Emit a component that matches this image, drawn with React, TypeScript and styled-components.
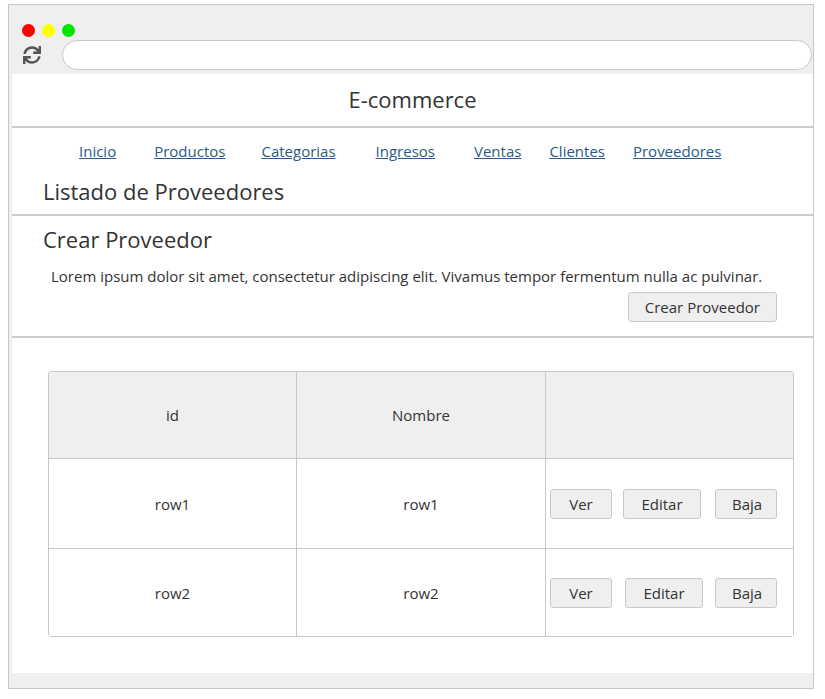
import styled, { createGlobalStyle } from 'styled-components'
import { FaSync } from 'react-icons/fa'

const GlobalStyle = createGlobalStyle`
  body {
    margin: 0;
    background: #ffffff;
    font-family: "Open Sans", "Noto Sans", sans-serif;
    color: #333333;
  }
`

const Frame = styled.div`
  box-sizing: border-box;
  width: 806px;
  margin: 4px 0 0 8px;
  border: 1px solid #c8c8c8;
  background: #efefef;
  padding: 0 0 15px 3px;
`

const Chrome = styled.div`
  display: flex;
  flex-direction: column;
  padding: 19px 1px 4px 10px;
`

const Lights = styled.div`
  display: flex;
  gap: 7px;
  height: 13px;
`

const Light = styled.span<{ $color: string }>`
  width: 13px;
  height: 13px;
  border-radius: 50%;
  background: ${p => p.$color};
`

const AddressRow = styled.div`
  display: flex;
  align-items: center;
  margin-top: 3px;
  padding-left: 1px;
  gap: 21px;
  color: #555555;
`

const UrlBar = styled.div`
  flex: 1;
  box-sizing: border-box;
  height: 30px;
  border: 1px solid #c8c8c8;
  border-radius: 15px;
  background: #ffffff;
`

const Page = styled.div`
  background: #ffffff;
  height: 599px;
  display: flex;
  flex-direction: column;
`

const Brand = styled.div`
  box-sizing: border-box;
  height: 54px;
  padding-bottom: 2px;
  display: flex;
  align-items: center;
  justify-content: center;
  font-size: 22px;
  border-bottom: 2px solid #cccccc;
`

const TopSection = styled.div`
  padding: 13px 0 8px 31px;
  border-bottom: 2px solid #cccccc;
`

const Nav = styled.nav`
  display: flex;
  height: 20px;
  align-items: center;
  padding-left: 36px;
`

const NavLink = styled.a<{ $ml: number }>`
  margin-left: ${p => p.$ml}px;
  font-size: 15px;
  color: #2b5a8a;
  text-decoration: underline;
  line-height: 20px;
`

const Title = styled.h1`
  margin: 15px 0 0;
  font-size: 22px;
  font-weight: 400;
  line-height: 30px;
`

const CreateSection = styled.section`
  display: flex;
  flex-direction: column;
  padding: 8px 36px 14px 31px;
  border-bottom: 2px solid #cccccc;
`

const Subtitle = styled.h2`
  margin: 0;
  font-size: 22px;
  font-weight: 400;
  line-height: 30px;
`

const Lead = styled.p`
  margin: 12px 0 0 8px;
  font-size: 15px;
  line-height: 20px;
`

const Button = styled.button<{ $w?: number; $ml?: number }>`
  box-sizing: border-box;
  height: 30px;
  width: ${p => (p.$w ? `${p.$w}px` : 'auto')};
  margin-left: ${p => p.$ml ?? 0}px;
  padding: 0 16px;
  border: 1px solid #c8c8c8;
  border-radius: 3px;
  background: #efefef;
  font-family: inherit;
  font-size: 15px;
  color: #333333;
`

const CreateButton = styled(Button)`
  align-self: flex-end;
  margin-top: 6px;
`

const TableArea = styled.div`
  padding: 33px 19px 0 36px;
`

const Grid = styled.div`
  display: grid;
  grid-template-columns: 248px 249px 1fr;
  grid-template-rows: 87px 90px 87px;
  border: 1px solid #c8c8c8;
  border-radius: 3px;
  overflow: hidden;
`

const Cell = styled.div<{ $head?: boolean; $last?: boolean; $bottom?: boolean }>`
  display: flex;
  align-items: center;
  justify-content: center;
  font-size: 15px;
  background: ${p => (p.$head ? '#efefef' : '#ffffff')};
  border-right: ${p => (p.$last ? 'none' : '1px solid #c8c8c8')};
  border-bottom: ${p => (p.$bottom ? 'none' : '1px solid #c8c8c8')};
`

const Actions = styled(Cell)`
  justify-content: flex-start;
  padding-left: 4px;
`

const rows = ['row1', 'row2']
const links: [string, number][] = [
  ['Inicio', 0],
  ['Productos', 38],
  ['Categorias', 36],
  ['Ingresos', 40],
  ['Ventas', 39],
  ['Clientes', 28],
  ['Proveedores', 28],
]

export default function App() {
  return (
    <>
      <GlobalStyle />
      <Frame>
        <Chrome>
          <Lights>
            <Light $color="#ff0000" />
            <Light $color="#ffff00" />
            <Light $color="#00e600" />
          </Lights>
          <AddressRow>
            <FaSync size={18} />
            <UrlBar />
          </AddressRow>
        </Chrome>
        <Page>
          <Brand>E-commerce</Brand>
          <TopSection>
            <Nav>
              {links.map(([label, ml]) => (
                <NavLink key={label} href="#" $ml={ml}>
                  {label}
                </NavLink>
              ))}
            </Nav>
            <Title>Listado de Proveedores</Title>
          </TopSection>
          <CreateSection>
            <Subtitle>Crear Proveedor</Subtitle>
            <Lead>
              Lorem ipsum dolor sit amet, consectetur adipiscing elit. Vivamus tempor fermentum nulla ac
              pulvinar.
            </Lead>
            <CreateButton>Crear Proveedor</CreateButton>
          </CreateSection>
          <TableArea>
            <Grid>
              <Cell $head>id</Cell>
              <Cell $head>Nombre</Cell>
              <Cell $head $last />
              {rows.map((r, i) => {
                const bottom = i === rows.length - 1
                return [
                  <Cell key={r + 'id'} $bottom={bottom}>{r}</Cell>,
                  <Cell key={r + 'name'} $bottom={bottom}>{r}</Cell>,
                  <Actions key={r + 'act'} $bottom={bottom} $last>
                    <Button $w={62}>Ver</Button>
                    <Button $w={78} $ml={11 + i * 2}>Editar</Button>
                    <Button $w={62} $ml={14 - i * 2}>Baja</Button>
                  </Actions>,
                ]
              })}
            </Grid>
          </TableArea>
        </Page>
      </Frame>
    </>
  )
}
